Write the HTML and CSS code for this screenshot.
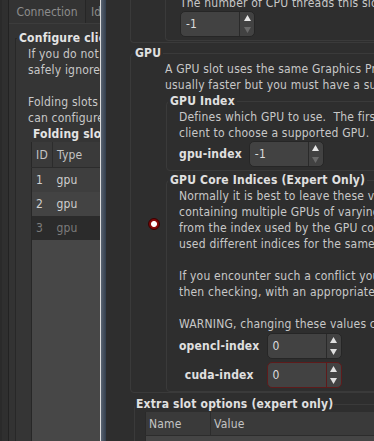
FILE: index.html
```html
<!DOCTYPE html>
<html lang="en">
<head>
    <meta charset="UTF-8">
    <meta name="viewport" content="width=device-width, initial-scale=1.0">
    <title>FAHControl - Configure</title>
    <link rel="stylesheet" href="styles.css">
</head>
<body>

<div class="app">
    <!-- configure dialog, behind the slot editor -->
    <div class="left">
        <div class="dialog">
            <div class="tabwidget">
                <div class="tabs">
                    <div class="tab">Connection</div>
                    <div class="tab tab-next">Identity</div>
                </div>
                <div class="tab-page">
                    <fieldset class="group">
                        <legend>Configure client slots</legend>
                        <div class="group-body">
                            <p class="help">If you do not understand these options you can<br>safely ignore this section.</p>
                            <p class="help">Folding slots are where work gets done.  You<br>can configure your slots here.</p>
                            <div class="slots">
                                <div class="slots-title">Folding slots</div>
                                <table class="slot-table">
                                    <thead>
                                        <tr><th class="col-id">ID</th><th>Type</th></tr>
                                    </thead>
                                    <tbody>
                                        <tr class="row-odd"><td>1</td><td>gpu</td></tr>
                                        <tr class="row-even"><td>2</td><td>gpu</td></tr>
                                        <tr class="row-selected"><td>3</td><td>gpu</td></tr>
                                        <tr class="row-fill"><td></td><td></td></tr>
                                    </tbody>
                                </table>
                            </div>
                        </div>
                    </fieldset>
                </div>
            </div>
        </div>
    </div>

    <div class="splitter"></div>

    <!-- slot editor, scrolled down a little -->
    <div class="right">
        <div class="scroll">
            <div class="cpu-outer">
                <div class="cpu-inner">
                    <p class="help">The number of CPU threads this slot should use.</p>
                    <div class="spin">
                        <span class="spin-value">-1</span>
                        <span class="spin-arrows">
                            <svg width="7" height="6" viewBox="0 0 7 6"><polygon points="3.5,0 7,6 0,6" fill="#e8e8e8"/></svg>
                            <svg width="7" height="6" viewBox="0 0 7 6"><polygon points="0,0 7,0 3.5,6" fill="#6a6a6a"/></svg>
                        </span>
                    </div>
                </div>
            </div>

            <fieldset class="frame gpu">
                <legend>GPU</legend>
                <div class="gpu-body">
                    <p class="help">A GPU slot uses the same Graphics Processing Unit as your display.  It is<br>usually faster but you must have a supported graphics card.</p>

                    <fieldset class="frame sub">
                        <legend>GPU Index</legend>
                        <div class="sub-body">
                            <p class="help">Defines which GPU to use.&nbsp; The first GPU is 0.&nbsp; A value of -1 allows the<br>client to choose a supported GPU.</p>
                            <div class="field-row">
                                <label class="field-label">gpu-index</label>
                                <div class="spin">
                                    <span class="spin-value">-1</span>
                                    <span class="spin-arrows">
                                        <svg width="7" height="6" viewBox="0 0 7 6"><polygon points="3.5,0 7,6 0,6" fill="#e8e8e8"/></svg>
                                        <svg width="7" height="6" viewBox="0 0 7 6"><polygon points="0,0 7,0 3.5,6" fill="#6a6a6a"/></svg>
                                    </span>
                                </div>
                            </div>
                        </div>
                    </fieldset>

                    <fieldset class="frame sub core">
                        <legend>GPU Core Indices (Expert Only)</legend>
                        <div class="sub-body core-body">
                            <span class="radio"></span>
                            <p class="help">Normally it is best to leave these values at -1.  But on systems<br>containing multiple GPUs of varying types the OpenCL or CUDA index<br>from the index used by the GPU core may differ.  Drivers may have<br>used different indices for the same GPU.</p>
                            <p class="help">If you encounter such a conflict you can try setting these values<br>then checking, with an appropriate tool, which GPU is used.</p>
                            <p class="help">WARNING, changing these values can cause work units to fail.</p>
                            <div class="field-grid">
                                <label class="field-label">opencl-index</label>
                                <div class="spin">
                                    <span class="spin-value">0</span>
                                    <span class="spin-arrows">
                                        <svg width="7" height="6" viewBox="0 0 7 6"><polygon points="3.5,0 7,6 0,6" fill="#e0e0e0"/></svg>
                                        <svg width="7" height="6" viewBox="0 0 7 6"><polygon points="0,0 7,0 3.5,6" fill="#e0e0e0"/></svg>
                                    </span>
                                </div>
                                <label class="field-label">cuda-index</label>
                                <div class="spin spin-focus">
                                    <span class="spin-value">0</span>
                                    <span class="spin-arrows">
                                        <svg width="7" height="6" viewBox="0 0 7 6"><polygon points="3.5,0 7,6 0,6" fill="#e0e0e0"/></svg>
                                        <svg width="7" height="6" viewBox="0 0 7 6"><polygon points="0,0 7,0 3.5,6" fill="#e0e0e0"/></svg>
                                    </span>
                                </div>
                            </div>
                        </div>
                    </fieldset>
                </div>
            </fieldset>

            <fieldset class="frame extra">
                <legend>Extra slot options (expert only)</legend>
                <table class="options-table">
                    <thead>
                        <tr><th class="col-name">Name</th><th>Value</th></tr>
                    </thead>
                    <tbody>
                        <tr><td></td><td></td></tr>
                    </tbody>
                </table>
            </fieldset>
        </div>
    </div>
</div>

</body>
</html>
```

FILE: styles.css
```css
body {
    margin: 0;
    background: #2e2e2e;
    font-family: "DejaVu Sans Condensed", "DejaVu Sans", sans-serif;
    font-size: 12px;
    line-height: 16px;
    letter-spacing: 0.2px;
    color: #c8c8c8;
    overflow: hidden;
}

.app {
    display: flex;
    height: 441px;
}

/* ---------- left: configure dialog ---------- */

.left {
    width: 100px;
    flex: none;
    overflow: hidden;
    background: #2a2a2a;
    padding-left: 2px;
    box-sizing: border-box;
}

.dialog {
    height: 100%;
    width: 400px;
    padding-left: 6px;
    background: #2f2f2f;
}

.tabwidget {
    height: 100%;
    display: flex;
    flex-direction: column;
    border-left: 1px solid #222;
}

.tabs {
    display: flex;
    height: 23px;
    flex: none;
}

.tab {
    width: 76px;
    padding-top: 4px;
    text-align: center;
    letter-spacing: 0;
    color: #8c8c8c;
    background: #333;
    border-right: 1px solid #262626;
}

.tab-next {
    width: auto;
    padding-left: 5px;
    text-align: left;
    border-right: none;
    background: #303030;
}

.tab-page {
    flex: 1;
    background: #333;
    border-top: 1px solid #3c3c3c;
    padding-left: 6px;
}

.group {
    margin: 7px 0 0 0;
    padding: 0;
    height: 440px;
    border: 1px solid #282828;
    border-right: none;
    background: #353535;
}

.group legend {
    margin-left: 1px;
    padding: 0 2px;
    line-height: 14px;
    font-weight: bold;
    color: #e4e4e4;
}

.group-body {
    padding: 1px 0 0 12px;
}

.help {
    margin: 0 0 16px;
    white-space: nowrap;
}

.slots {
    margin: -16px 0 0 3px;
}

.slots-title {
    padding-left: 2px;
    font-weight: bold;
    color: #e4e4e4;
}

.slot-table {
    border-collapse: collapse;
    width: 300px;
    border-left: 1px solid #272727;
}

.slot-table th {
    height: 25px;
    padding: 0 0 0 4px;
    text-align: left;
    font-weight: normal;
    color: #c4c4c4;
    background: #3a3a3a;
    border-bottom: 1px solid #2c2c2c;
}

.slot-table th.col-id {
    width: 16px;
    border-right: 1px solid #2c2c2c;
}

.slot-table td {
    height: 24px;
    padding: 0 0 0 4px;
    color: #d0d0d0;
}

.row-odd td {
    background: #3e3e3e;
}

.row-even td {
    background: #434343;
}

.row-selected td {
    background: #2b2b2b;
    color: #7c7c7c;
}

.row-fill td {
    height: 220px;
    background: #474747;
}

/* ---------- splitter ---------- */

.splitter {
    flex: none;
    width: 5px;
    border-left: 1px solid #dcdcdc;
    background: linear-gradient(to right, #5a6472, #333e4c);
}

/* ---------- right: slot editor ---------- */

.right {
    flex: 1;
    overflow: hidden;
}

.scroll {
    width: 700px;
    margin-top: -5px;
}

.cpu-outer {
    margin-left: 24px;
    padding-left: 34px;
    border-left: 1px solid #3a3a3a;
    border-bottom: 1px solid #3a3a3a;
    border-radius: 0 0 0 4px;
}

.cpu-inner {
    margin-bottom: 1px;
    padding: 0 0 3px 14px;
    border-left: 1px solid #3a3a3a;
    border-bottom: 1px solid #3a3a3a;
    border-radius: 0 0 0 4px;
}

.cpu-inner .help {
    margin: 0;
}

.frame {
    margin: 0;
    padding: 0;
    border: 1px solid #3a3a3a;
    border-radius: 4px;
}

.frame legend {
    margin-left: 1px;
    padding: 0 2px;
    line-height: 14px;
    font-weight: bold;
    color: #e0e0e0;
}

.gpu {
    margin: 3px 0 0 24px;
}

.gpu > legend {
    margin-left: 2px;
}

.gpu-body {
    padding: 1px 0 0 34px;
}

.gpu-body > .help {
    margin: 0;
}

.sub {
    margin: 1px 0 0 1px;
}

.sub-body {
    padding: 1px 0 3px 12px;
}

.sub-body .help:last-of-type {
    margin: 0;
}

.core {
    margin-top: 2px;
}

.core-body {
    position: relative;
}

.field-row {
    display: flex;
    align-items: center;
    gap: 7px;
}

.field-label {
    font-weight: bold;
    color: #e0e0e0;
}

.field-grid {
    display: grid;
    grid-template-columns: max-content max-content;
    column-gap: 7px;
    row-gap: 3px;
    align-items: center;
    justify-items: center;
    margin-top: 1px;
}

.spin {
    display: flex;
    width: 75px;
    height: 26px;
    box-sizing: border-box;
    border: 1px solid #262626;
    border-radius: 5px;
    background: #424242;
}

.spin-focus {
    border-color: #5e1b1b;
}

.spin-value {
    flex: 1;
    padding-left: 5px;
    line-height: 24px;
    color: #dcdcdc;
}

.spin-arrows {
    width: 14px;
    display: flex;
    flex-direction: column;
    align-items: center;
    justify-content: space-around;
    border-left: 1px solid #2a2a2a;
}

.spin-focus .spin-arrows {
    border-left-color: #5e1b1b;
}

.radio {
    position: absolute;
    left: -19px;
    top: 31px;
    width: 12px;
    height: 12px;
    box-sizing: border-box;
    border-radius: 50%;
    border: 1px solid #3c0000;
    background: radial-gradient(circle, #ffffff 0 2.5px, #8c0a0a 3.5px, #5c0000 100%);
}

.extra {
    margin: 4px 0 0 28px;
}

.extra legend {
    margin-left: 0;
    padding: 0 1px;
}

.options-table {
    margin: 1px 0 0 10px;
    width: 400px;
    border-collapse: collapse;
    border-left: 1px solid #2a2a2a;
}

.options-table th {
    height: 23px;
    padding: 0 0 0 3px;
    text-align: left;
    font-weight: normal;
    color: #c4c4c4;
    background: #3a3a3a;
    border-bottom: 1px solid #2c2c2c;
}

.options-table th.col-name {
    width: 61px;
    border-right: 1px solid #2c2c2c;
}

.options-table td {
    height: 40px;
    background: #454545;
}
```
